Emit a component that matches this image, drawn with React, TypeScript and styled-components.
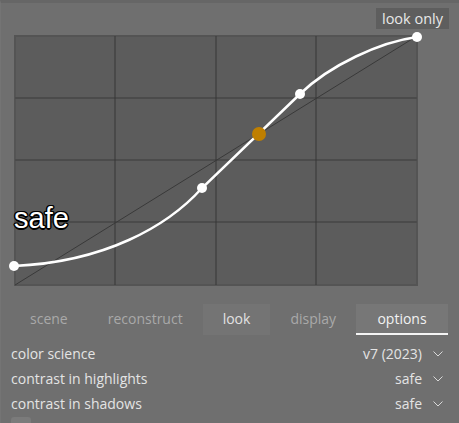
import React from 'react';
import styled, { createGlobalStyle } from 'styled-components';

const GlobalStyle = createGlobalStyle`
	html,
	body {
		margin: 0;
		padding: 0;
		background: #6f6f6f;
	}

	body {
		font-family: 'Open Sans', 'Noto Sans', sans-serif;
		font-size: 14px;
		color: #e4e4e4;
	}
`;

const Panel = styled.div`
	width: 459px;
	height: 423px;
	overflow: hidden;
	box-sizing: border-box;
	background: #6f6f6f;
	border-top: 3px solid #666666;
	border-left: 1px solid #747474;
`;

const GraphBox = styled.div`
	position: relative;
	height: 301px;
`;

const GraphSvg = styled.svg`
	display: block;
	width: 458px;
	height: 301px;
`;

const CurveLabel = styled.div`
	position: absolute;
	top: 5px;
	right: 10px;
	height: 21px;
	padding: 0 6px;
	background: #5e5e5e;
	color: #e8e8e8;
	font-size: 14.5px;
	line-height: 21px;
`;

const SafeLabel = styled.div`
	position: absolute;
	left: 13px;
	top: 198px;
	font-family: 'Liberation Sans', Arial, sans-serif;
	font-size: 29px;
	line-height: 34px;
	color: #ffffff;
	text-shadow:
		-1px -1px 0 #000,
		1px -1px 0 #000,
		-1px 1px 0 #000,
		1px 1px 0 #000,
		0 -1.5px 0 #000,
		0 1.5px 0 #000,
		-1.5px 0 0 #000,
		1.5px 0 0 #000;
`;

const TabBar = styled.div`
	display: flex;
	margin: 0 11px 0 9px;
	height: 31px;
`;

const Tab = styled.div<{ variant?: 'hover' | 'active' }>`
	padding: 0 20px;
	height: 29px;
	line-height: 29px;
	text-align: center;
	white-space: nowrap;
	color: ${(p) =>
		p.variant === 'active' ? '#f2f2f2' : p.variant === 'hover' ? '#e2e2e2' : '#a9a9a9'};
	background: ${(p) =>
		p.variant === 'active' ? '#777777' : p.variant === 'hover' ? '#747474' : 'transparent'};
	border-bottom: 2px solid ${(p) => (p.variant === 'active' ? '#f4f4f4' : 'transparent')};
	flex: ${(p) => (p.variant === 'active' ? '1' : '0 0 auto')};
`;

const Rows = styled.div`
	margin-top: 6px;
`;

const Row = styled.div`
	display: flex;
	align-items: center;
	justify-content: space-between;
	height: 25px;
	padding: 0 16px 0 10px;
`;

const Value = styled.div`
	display: flex;
	align-items: center;
	gap: 11px;
`;

const CheckRow = styled.div`
	display: flex;
	align-items: flex-start;
	gap: 8px;
	height: 25px;
	padding: 1px 10px 0;
`;

const CheckBox = styled.div`
	flex: 0 0 auto;
	width: 20px;
	height: 20px;
	border-radius: 3px;
	background: #7b7b7b;
`;

const CheckLabel = styled.span`
	margin-left: 36px;
	line-height: 20px;
	margin-top: 3px;
`;

const Chevron = () => (
	<svg width='10' height='6' viewBox='0 0 10 6'>
		<polyline
			points='0.5,0.5 5,5 9.5,0.5'
			fill='none'
			stroke='#d8d8d8'
			strokeWidth='1'
		/>
	</svg>
);

const gridX = [115, 216, 316];
const gridY = [98, 160, 222];

const curve =
	'M14,266 C105,262 168,226 202,188 L300,94 C330,65 380,42 417,37';

const points: [number, number][] = [
	[14, 266],
	[202, 188],
	[300, 94],
	[417, 37],
];

const options = [
	{ label: 'color science', value: 'v7 (2023)' },
	{ label: 'contrast in highlights', value: 'safe' },
	{ label: 'contrast in shadows', value: 'safe' },
];

export default function App() {
	return (
		<>
			<GlobalStyle />
			<Panel>
				<GraphBox>
					<GraphSvg viewBox='1 3 458 301'>
						<rect x='15' y='36' width='402' height='249' fill='#5c5c5c' stroke='#545454' strokeWidth='2' />
						{gridY.map((y) => (
							<line key={y} x1='15' x2='417' y1={y} y2={y} stroke='#4b4b4b' strokeWidth='2' />
						))}
						{gridX.map((x) => (
							<line key={x} x1={x} x2={x} y1='36' y2='285' stroke='#363636' strokeWidth='1' />
						))}
						<line x1='15' y1='285' x2='417' y2='36' stroke='#393939' strokeWidth='1' />
						<path d={curve} fill='none' stroke='#ffffff' strokeWidth='2.5' />
						{points.map(([x, y]) => (
							<circle key={x} cx={x} cy={y} r='5' fill='#ffffff' />
						))}
						<circle cx='259' cy='134' r='7' fill='#bf7f00' />
					</GraphSvg>
					<CurveLabel>look only</CurveLabel>
					<SafeLabel>safe</SafeLabel>
				</GraphBox>
				<TabBar>
					<Tab>scene</Tab>
					<Tab>reconstruct</Tab>
					<Tab variant='hover'>look</Tab>
					<Tab>display</Tab>
					<Tab variant='active'>options</Tab>
				</TabBar>
				<Rows>
					{options.map((o) => (
						<Row key={o.label}>
							<span>{o.label}</span>
							<Value>
								<span>{o.value}</span>
								<Chevron />
							</Value>
						</Row>
					))}
					<CheckRow>
						<CheckBox />
						<CheckLabel>use custom middle-gray values</CheckLabel>
					</CheckRow>
				</Rows>
			</Panel>
		</>
	);
}
